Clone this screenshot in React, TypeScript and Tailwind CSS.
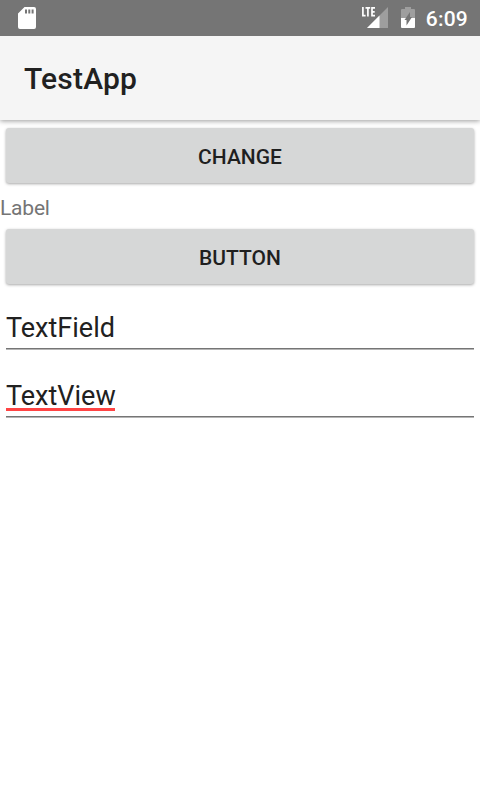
function StatusBar() {
  return (
    <div className="flex h-9 items-center bg-[#757575] pl-[18px] pr-[12px] text-white">
      <svg width="18" height="22" viewBox="0 0 18 22" className="shrink-0">
        <path fillRule="evenodd" fill="#fff" d="M6.500 0H16a2 2 0 0 1 2 2v18a2 2 0 0 1-2 2H2a2 2 0 0 1-2-2V6.500zM7 2.500v4h2v-4zm3.300 0v4h2v-4zm3.300 0v4h2v-4z" />
      </svg>
      <div className="flex-1" />
      <svg width="28" height="22" viewBox="0 0 28 22" className="mr-[12px] shrink-0">
        <path fill="#9e9e9e" d="M27 0v21H6z" />
        <path fill="#fff" d="M18.500 8.500V21H6z" />
        <path fill="none" stroke="#fff" strokeWidth="1.700" d="M1.900 0v8.700H4.600M4.500.9H9.200M6.900.9v8.700M14 .9h-3v7.800h3M11 4.800h2.700" />
      </svg>
      <svg width="14" height="22" viewBox="0 0 14 22" className="mr-[11px] shrink-0">
        <path fill="#9e9e9e" d="M4 0h6v2h3a1 1 0 0 1 1 1v8H0V3a1 1 0 0 1 1-1h3z" />
        <path fill="#fff" d="M0 11h14v9a1 1 0 0 1-1 1H1a1 1 0 0 1-1-1z" />
        <path fill="#757575" d="M9 5v5h2L5.500 18.500V13H3.500z" />
      </svg>
      <span className="relative top-px text-[21px] leading-9 font-medium tracking-[0.2px]">6:09</span>
    </div>
  );
}

function Button({ children }: { children: string }) {
  return (
    <button className="block h-[55px] w-full rounded-[3px] bg-[#d6d7d7] pt-[4px] text-[21px] font-medium text-[#1f1f1f] shadow-[0_1px_3px_rgba(0,0,0,0.35)]">
      {children}
    </button>
  );
}

function Field({ value, misspelled = false }: { value: string; misspelled?: boolean }) {
  return (
    <div className="mx-1.5 h-[46px] text-[27px] leading-[48px] text-[#212121]">
      <div className="relative h-[44px]">
        <span>{value}</span>
        {misspelled && <span className="absolute top-[36px] left-0 h-[3px] w-[109px] bg-[#f44]" />}
      </div>
      <div className="h-px bg-[#757575]" />
      <div className="h-px bg-[#b5b5b5]" />
    </div>
  );
}

export default function App() {
  return (
    <div className="h-[800px] w-[480px] overflow-hidden bg-white font-[Roboto,sans-serif]">
      <StatusBar />
      <header className="flex h-[84px] items-center bg-[#f5f5f5] px-6 shadow-[0_1px_5px_rgba(0,0,0,0.4)] [clip-path:inset(0_0_-10px_0)]">
        <h1 className="text-[30px] font-medium tracking-[0.2px] text-[#212121]">TestApp</h1>
      </header>
      <main>
        <div className="px-1.5 pt-2"><Button>CHANGE</Button></div>
        <div className="mt-[10px] h-[30px] text-[21px] leading-[30px] tracking-[-0.2px] text-[#757575]">Label</div>
        <div className="mt-[6px] px-1.5"><Button>BUTTON</Button></div>
        <div className="mt-[20px]"><Field value="TextField" /></div>
        <div className="mt-[22px]"><Field value="TextView" misspelled /></div>
      </main>
    </div>
  );
}
